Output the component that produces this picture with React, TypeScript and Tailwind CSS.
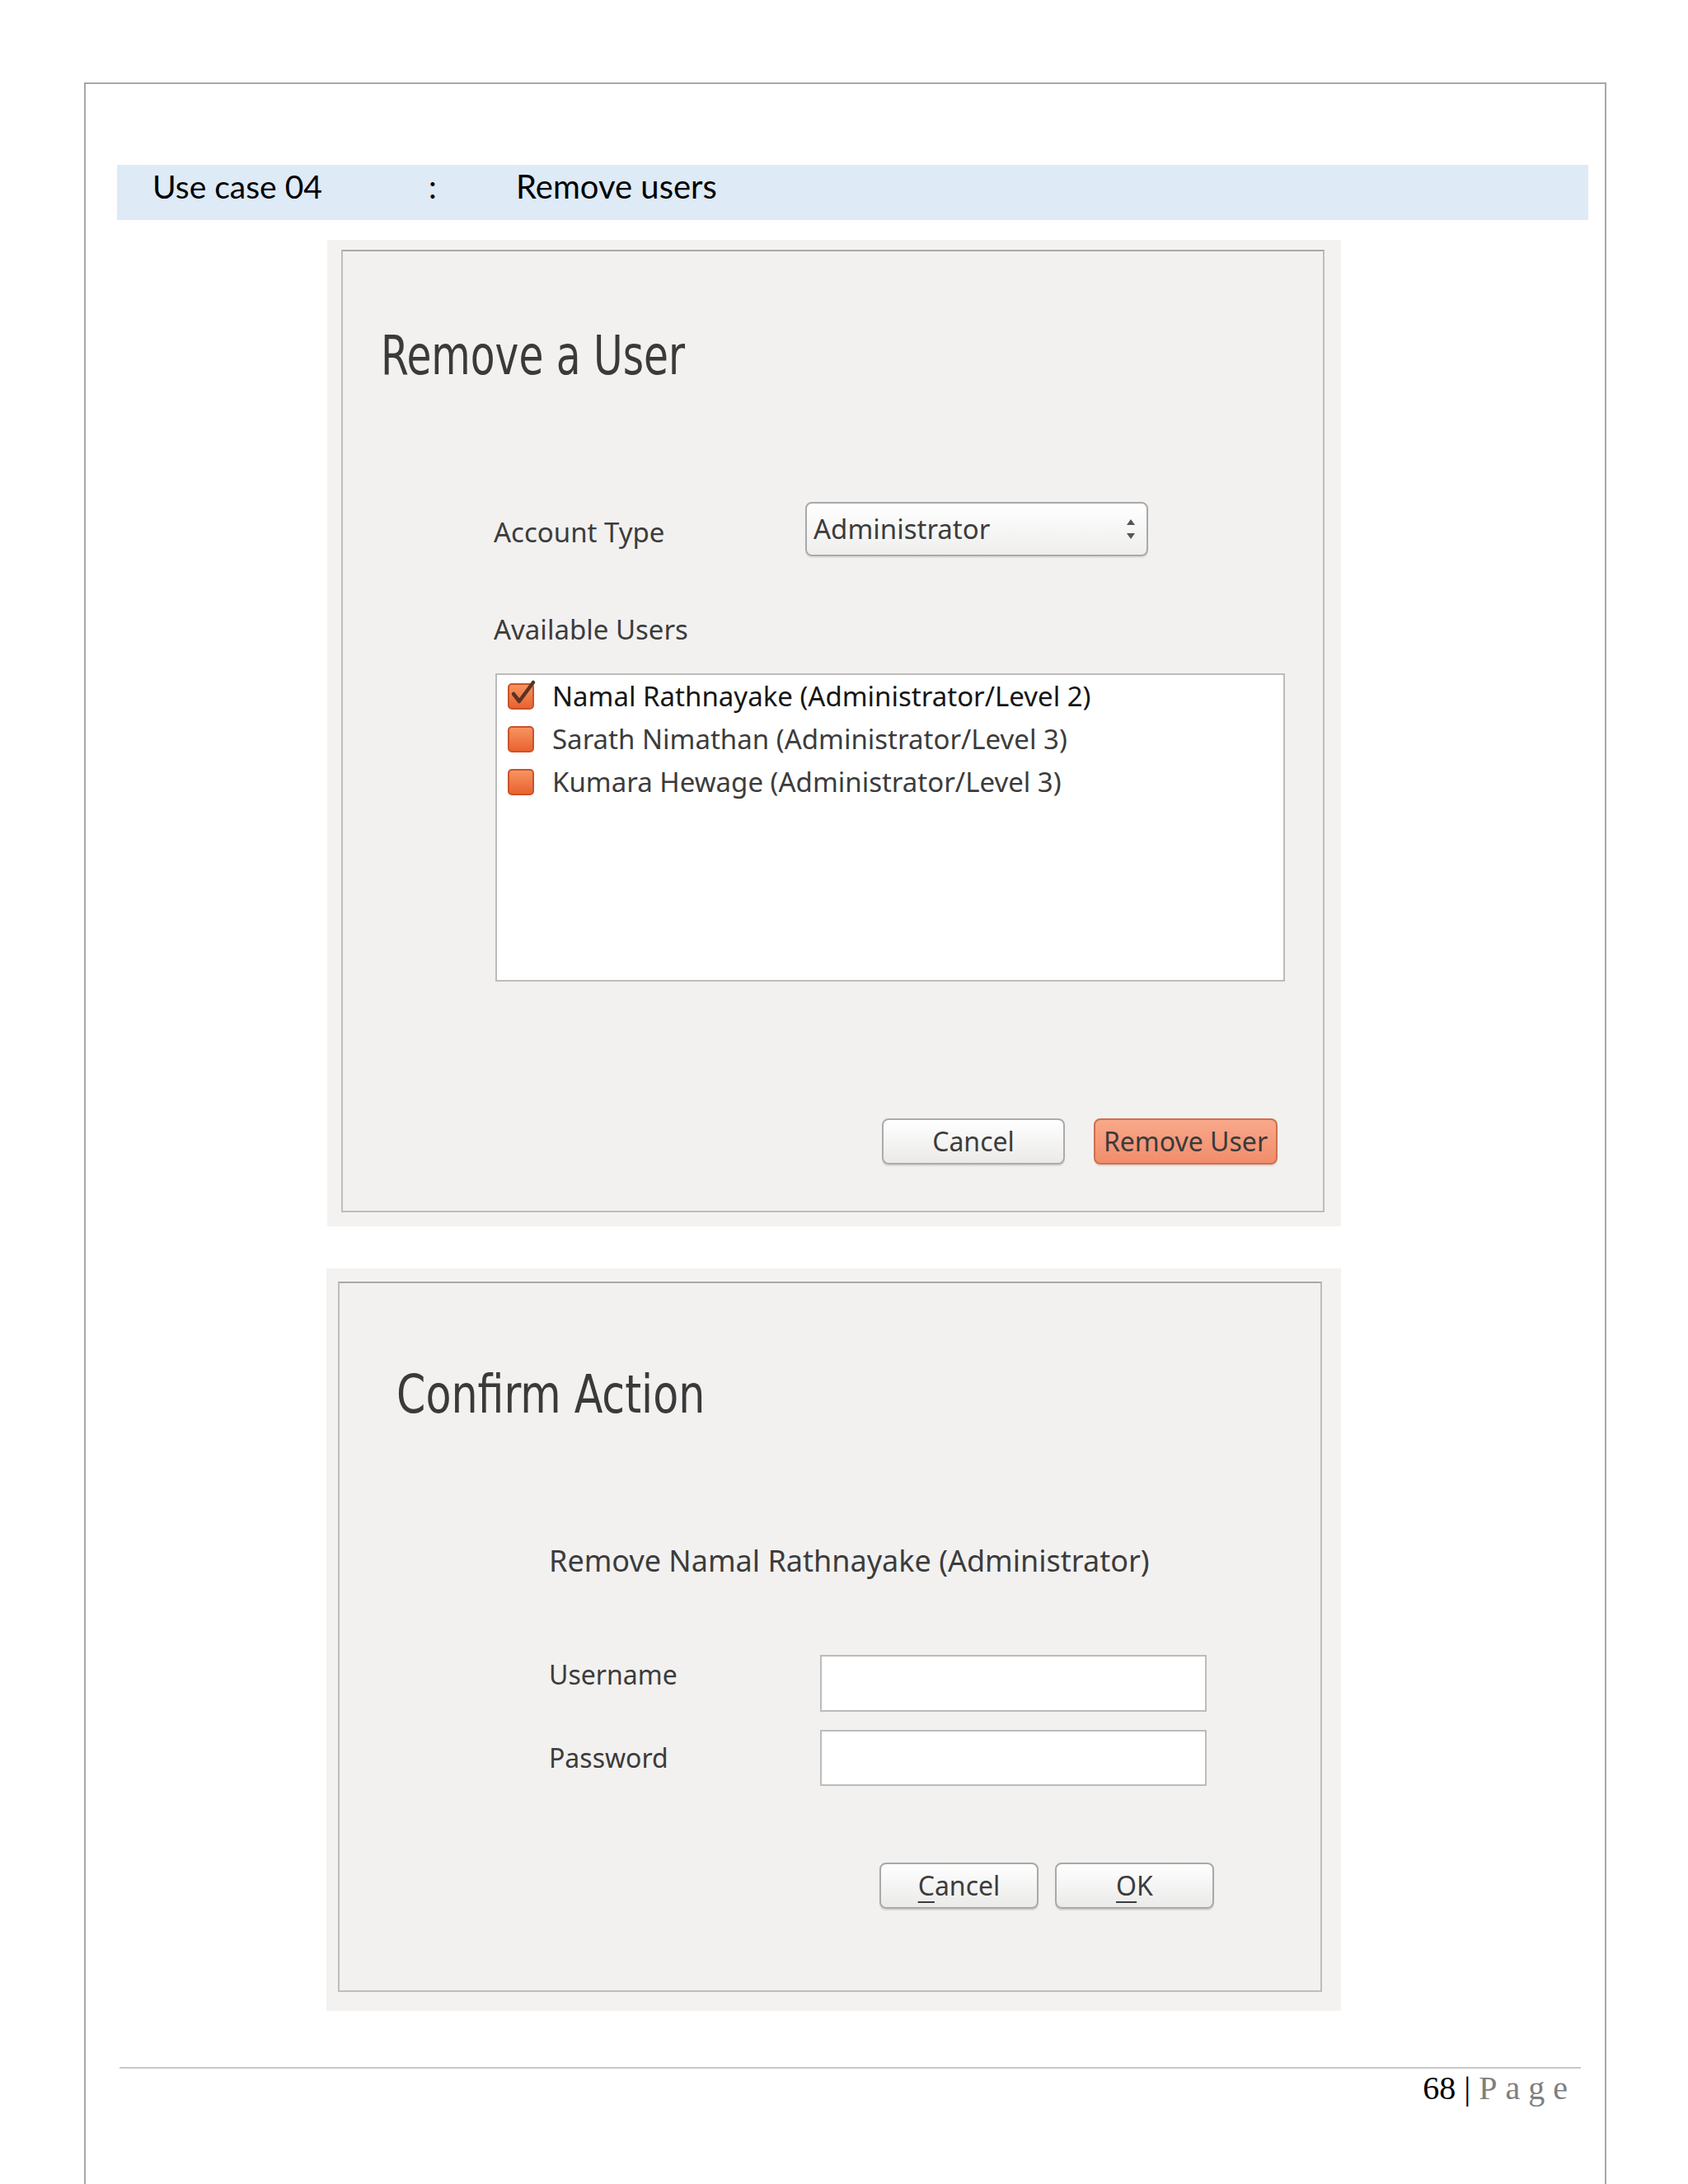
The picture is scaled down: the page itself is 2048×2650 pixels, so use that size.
import React from "react";

const UI = { fontFamily: "'Noto Sans', 'Open Sans', sans-serif" };
const HEAD = { fontFamily: "Lato, 'Noto Sans', sans-serif" };
const TITLE = { fontFamily: "'DejaVu Sans Condensed', 'DejaVu Sans', sans-serif" };

function Check({ checked }: { checked?: boolean }) {
  return (
    <div className="relative w-[32px] h-[32px] shrink-0">
      <div className="w-[32px] h-[32px] rounded-[5px] border-2 border-[#c9532a] bg-gradient-to-b from-[#f7935f] to-[#e9622f]" />
      {checked && (
        <svg className="absolute left-0 top-[-6px]" width="38" height="38" viewBox="0 0 38 38">
          <path d="M7 19 L14 28 L31 5" fill="none" stroke="#5a3422" strokeWidth="4.5" strokeLinecap="round" strokeLinejoin="round" />
        </svg>
      )}
    </div>
  );
}

export default function App() {
  return (
    <div className="w-[2048px] h-[2650px] bg-white overflow-hidden pt-[100px] pl-[102px]">
      <div className="w-[1847px] h-[2550px] border-x-2 border-t-2 border-[#a8a8a8] flex flex-col">
        {/* header band */}
        <div
          className="mt-[98px] ml-[38px] w-[1785px] h-[67px] bg-[#deeaf6] pt-[6px] pl-[43px] flex text-[39px] leading-[40px] text-black"
          style={HEAD}
        >
          <span className="w-[335px]">Use case 04</span>
          <span className="w-[106px]">:</span>
          <span className="text-[40px]">Remove users</span>
        </div>

        {/* dialog 1 */}
        <div className="mt-[24px] ml-[293px] w-[1230px] h-[1197px] bg-[#f3f2f1] pt-[12px] pl-[17px]">
          <div className="w-[1193px] h-[1168px] border-2 border-[#bdbdbd] border-t-[#a9a9a9] bg-[#f2f1f0] flex flex-col text-[#3c3c3c]" style={UI}>
            <div className="mt-[94px] ml-[46px] text-[66px] leading-[66px] text-[#3a3a3a] origin-left scale-x-[0.82] whitespace-nowrap" style={TITLE}>
              Remove a User
            </div>

            <div className="mt-[144px] flex items-start">
              <div className="ml-[183px] w-[378px] pt-[4px] text-[33px] leading-[66px]">Account Type</div>
              <div className="w-[416px] h-[66px] rounded-[8px] border-2 border-[#a9a9a9] bg-gradient-to-b from-white to-[#efeeed] flex items-center pl-[8px] pr-[12px] shadow-[0_2px_1px_rgba(0,0,0,0.08)]">
                <span className="flex-1 text-[33px] leading-[62px] text-[#3c3c3c]">Administrator</span>
                <svg width="14" height="32" viewBox="0 0 14 32">
                  <path d="M7 4 L12 11 L2 11 Z" fill="#555" />
                  <path d="M2 21 L12 21 L7 28 Z" fill="#555" />
                </svg>
              </div>
            </div>

            <div className="mt-[65px] ml-[183px] text-[33px] leading-[40px]">Available Users</div>

            <div className="mt-[33px] ml-[185px] w-[958px] h-[374px] bg-white border-2 border-[#bcbcbc] pl-[13px] flex flex-col">
              {[
                { t: "Namal Rathnayake (Administrator/Level 2)", c: true },
                { t: "Sarath Nimathan (Administrator/Level 3)", c: false },
                { t: "Kumara Hewage (Administrator/Level 3)", c: false },
              ].map((r) => (
                <div key={r.t} className="h-[52px] flex items-center gap-[22px]">
                  <Check checked={r.c} />
                  <span className={`text-[33px] leading-[52px] whitespace-nowrap ${r.c ? "text-[#161616]" : "text-[#3c3c3c]"}`}>{r.t}</span>
                </div>
              ))}
            </div>

            <div className="mt-[166px] flex justify-end pr-[55px] gap-[35px]">
              <div className="w-[222px] h-[56px] rounded-[8px] border-2 border-[#ababab] bg-gradient-to-b from-white to-[#ebeae9] flex items-center justify-center text-[32px] text-[#3c3c3c] shadow-[0_2px_1px_rgba(0,0,0,0.1)]">
                Cancel
              </div>
              <div className="w-[223px] h-[56px] rounded-[8px] border-2 border-[#cf6f4c] bg-gradient-to-b from-[#f9a88a] to-[#f08d6c] flex items-center justify-center text-[32px] text-[#3a3a3a] whitespace-nowrap shadow-[0_2px_1px_rgba(0,0,0,0.1)]">
                Remove User
              </div>
            </div>
          </div>
        </div>

        {/* dialog 2 */}
        <div className="mt-[51px] ml-[292px] w-[1231px] h-[901px] bg-[#f3f2f1] pt-[16px] pl-[14px]">
          <div className="w-[1194px] h-[862px] border-2 border-[#bdbdbd] border-t-[#a9a9a9] bg-[#f2f1f0] flex flex-col text-[#3c3c3c]" style={UI}>
            <div className="mt-[103px] ml-[69px] text-[64px] leading-[64px] text-[#3a3a3a] origin-left scale-x-[0.88] whitespace-nowrap" style={TITLE}>
              Confirm Action
            </div>

            <div className="mt-[148px] ml-[254px] text-[36px] leading-[44px] whitespace-nowrap">Remove Namal Rathnayake (Administrator)</div>

            <div className="mt-[92px] flex items-start">
              <div className="ml-[254px] w-[329px] text-[32px] leading-[48px]">Username</div>
              <div className="w-[469px] h-[69px] bg-white border-2 border-[#bcbcbc]" />
            </div>
            <div className="mt-[22px] flex items-start">
              <div className="ml-[254px] w-[329px] pt-[10px] text-[32px] leading-[48px]">Password</div>
              <div className="w-[469px] h-[68px] bg-white border-2 border-[#bcbcbc]" />
            </div>

            <div className="mt-[93px] ml-[655px] flex gap-[20px]">
              <div className="w-[193px] h-[56px] rounded-[8px] border-2 border-[#a9a9a9] bg-gradient-to-b from-white to-[#ebeae9] flex items-center justify-center text-[32px] text-[#3c3c3c] shadow-[0_2px_1px_rgba(0,0,0,0.12)]">
                <span><span className="underline decoration-2 underline-offset-[7px]">C</span>ancel</span>
              </div>
              <div className="w-[193px] h-[56px] rounded-[8px] border-2 border-[#a9a9a9] bg-gradient-to-b from-white to-[#ebeae9] flex items-center justify-center text-[32px] text-[#3c3c3c] shadow-[0_2px_1px_rgba(0,0,0,0.12)]">
                <span><span className="underline decoration-2 underline-offset-[7px]">O</span>K</span>
              </div>
            </div>
          </div>
        </div>

        {/* footer */}
        <div className="mt-[68px] ml-[41px] w-[1773px] h-[2px] bg-[#c8c8c8]" />
        <div
          className="ml-[41px] w-[1773px] flex justify-end pr-[6px] text-[40px] leading-[48px]"
          style={{ fontFamily: "'Liberation Serif', 'Times New Roman', serif" }}
        >
          <span className="text-black whitespace-pre">68 | </span>
          <span className="text-[#7f7f7f] tracking-[10px]">Page</span>
        </div>
      </div>
    </div>
  );
}
